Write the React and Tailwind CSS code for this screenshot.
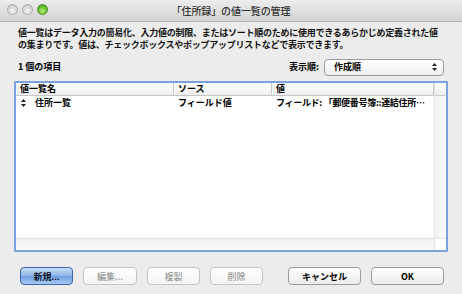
import React from "react";

const jp = { fontFamily: '"Noto Sans CJK JP", "Liberation Sans", sans-serif' };

function TrafficLight({ color }) {
  if (color === "green") {
    return (
      <div className="w-[11px] h-[11px] rounded-full border border-[#4f8a2a] bg-[radial-gradient(circle_at_50%_65%,#b9f07a_0%,#66c12e_55%,#3f8f17_100%)]" />
    );
  }
  return (
    <div className="w-[11px] h-[11px] rounded-full border border-[#a9a9a9] bg-[radial-gradient(circle_at_50%_65%,#f4f4f4_0%,#d6d6d6_60%,#bdbdbd_100%)]" />
  );
}

function Button({ children, primary, disabled, width, bold }) {
  return (
    <button
      className={`h-[18px] ${width} rounded-[4px] border text-[9px] leading-none flex items-center justify-center ${
        primary
          ? "border-[#3b66b0] bg-[linear-gradient(#c9ddf7,#8cb4ea_50%,#6f9fe2_51%,#a9c9f3)] text-black"
          : disabled
          ? "border-[#c4c4c4] bg-[linear-gradient(#ffffff,#f3f3f3)] text-[#9a9a9a]"
          : "border-[#9a9a9a] bg-[linear-gradient(#ffffff,#ececec)] text-black"
      } ${bold ? "font-bold" : "font-medium"}`}
      style={jp}
    >
      {children}
    </button>
  );
}

function UpDown() {
  return (
    <svg width="5" height="8" viewBox="0 0 5 8">
      <path d="M2.5 0 L5 3 L0 3 Z" fill="#222" />
      <path d="M2.5 8 L5 5 L0 5 Z" fill="#222" />
    </svg>
  );
}

export default function App() {
  return (
    <div className="w-[462px] h-[294px] bg-[#ececec] flex flex-col overflow-hidden" style={jp}>
      {/* タイトルバー */}
      <div className="h-[22px] relative flex items-center justify-center bg-[linear-gradient(#ededed,#d3d3d3)] border-b border-[#b5b5b5]">
        <div className="absolute left-[7px] top-[4px] flex gap-[4px]">
          <TrafficLight />
          <TrafficLight />
          <TrafficLight color="green" />
        </div>
        <span className="text-[10px] font-medium text-[#333] tracking-[-0.1px]">「住所録」の値一覧の管理</span>
      </div>

      {/* 説明 */}
      <div className="px-[18px] pt-[5px] text-[9px] leading-[12px] font-semibold text-[#111] tracking-[-0.25px]">
        <p>値一覧はデータ入力の簡易化、入力値の制限、またはソート順のために使用できるあらかじめ定義された値</p>
        <p>の集まりです。値は、チェックボックスやポップアップリストなどで表示できます。</p>
      </div>

      {/* 項目数と表示順 */}
      <div className="flex items-center justify-between pl-[18px] pr-[18px] mt-[7px] h-[18px]">
        <span className="text-[9px] font-semibold">1 個の項目</span>
        <div className="flex items-center gap-[5px]">
          <span className="text-[9px] font-semibold">表示順:</span>
          <div className="w-[120px] h-[17px] rounded-[4px] border border-[#9c9c9c] bg-[linear-gradient(#ffffff,#efefef)] flex items-center justify-between pl-[9px] pr-[6px]">
            <span className="text-[9px] font-semibold">作成順</span>
            <UpDown />
          </div>
        </div>
      </div>

      {/* リスト */}
      <div className="mx-[14px] mt-[5px] h-[171px] border-2 border-[#7aa3dd] rounded-[1px] bg-white flex">
        <div className="flex-1 flex flex-col">
          <div className="h-[13px] flex border-b border-[#c6c6c6] bg-[linear-gradient(#ffffff,#eeeeee)] text-[9px] font-semibold leading-[12px]">
            <div className="w-[158px] pl-[4px] border-r border-[#c9c9c9]">値一覧名</div>
            <div className="w-[98px] pl-[4px] border-r border-[#c9c9c9]">ソース</div>
            <div className="flex-1 pl-[4px] border-r border-[#c9c9c9]">値</div>
          </div>
          <div className="h-[13px] flex items-center text-[9px] font-semibold">
            <div className="w-[158px] pl-[5px] flex items-center gap-[9px]">
              <UpDown />
              <span>住所一覧</span>
            </div>
            <div className="w-[98px] pl-[4px]">フィールド値</div>
            <div className="flex-1 pl-[4px] whitespace-nowrap overflow-hidden tracking-[-0.3px]">フィールド: 「郵便番号簿::連結住所…</div>
          </div>
          <div className="flex-1" />
          <div className="h-[12px] bg-[linear-gradient(#f0f0f0,#fbfbfb)] border-t border-[#e6e6e6]" />
        </div>
        <div className="w-[12px] flex flex-col bg-[linear-gradient(90deg,#f1f1f1,#fafafa)] border-l border-[#e4e4e4]">
          <div className="h-[13px] bg-[linear-gradient(#ffffff,#eeeeee)] border-b border-[#c6c6c6]" />
          <div className="flex-1" />
          <div className="h-[12px] bg-white border-t border-[#e6e6e6]" />
        </div>
      </div>

      {/* ボタン */}
      <div className="flex items-center mt-[15px] pl-[20px]">
        <div className="flex gap-[10px]">
          <Button primary width="w-[53px]">新規...</Button>
          <Button disabled width="w-[54px]">編集...</Button>
          <Button disabled width="w-[53px]">複製</Button>
          <Button disabled width="w-[53px]">削除</Button>
        </div>
        <div className="flex gap-[10px] ml-[25px]">
          <Button width="w-[73px]" bold>キャンセル</Button>
          <Button width="w-[73px]" bold>OK</Button>
        </div>
      </div>
    </div>
  );
}
